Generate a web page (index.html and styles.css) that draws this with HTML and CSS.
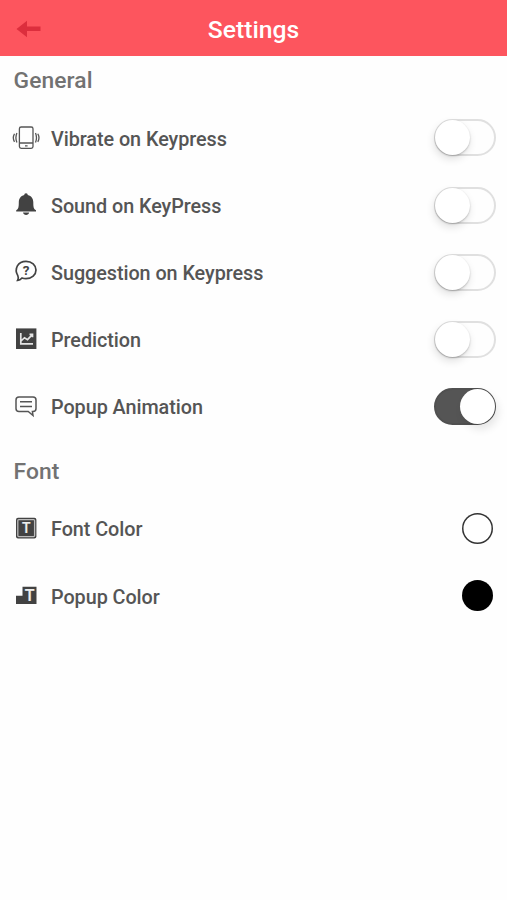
FILE: index.html
```html
<!DOCTYPE html>
<html lang="en">
<head>
<meta charset="utf-8">
<title>Settings</title>
<link rel="stylesheet" href="styles.css">
</head>
<body>
<header class="bar">
  <svg class="back" viewBox="0 0 26 18"><path d="M.5 9 11 .7v5.8h13.500v4.600H11v6.200z"/></svg>
  <h1>Settings</h1>
</header>
<main>
  <h2 class="section">General</h2>
  <div class="row">
    <svg class="icon line" viewBox="0 0 28 28"><rect x="7.400" y="3" width="13.600" height="21.400" rx="1.800"/><path d="M7.400 19H21M13 21.800h2.600M4.900 9q-2 4.700 0 9.400M2.500 9.700q-2.400 4.200 0 8.200M23.500 9q2 4.700 0 9.400M25.800 9.700q2.400 4.200 0 8.200"/></svg>
    <span class="label">Vibrate on Keypress</span><span class="toggle"></span>
  </div>
  <div class="row">
    <svg class="icon" viewBox="0 0 28 28"><path d="M14 2.300c1.200 0 1.700.8 1.700 1.600 3.900.9 5.600 3.700 5.600 7.300 0 4.900.4 6.800 2.700 8.100v1.100H4.200v-1.100c2.300-1.300 2.600-3.200 2.600-8.100 0-3.600 1.700-6.400 5.500-7.300 0-.8.500-1.600 1.700-1.600zM11 21.500h6.200c-.4 3.300-5.800 3.300-6.200 0z"/></svg>
    <span class="label">Sound on KeyPress</span><span class="toggle"></span>
  </div>
  <div class="row">
    <svg class="icon" viewBox="0 0 28 28"><path class="bubble" d="M5.800 17.700C1.800 10.700 6 3.300 14 3.300c5.800 0 10 3.900 10 8.700s-4.200 8.700-10 8.700c-1.600 0-2.800-.2-4-.7-1.300 1.500-2.700 2.300-4.400 2.400.9-1.600 1-3.100.2-4.700z"/><text class="question" x="14" y="16.800">?</text></svg>
    <span class="label">Suggestion on Keypress</span><span class="toggle"></span>
  </div>
  <div class="row">
    <svg class="icon" viewBox="0 0 28 28"><path d="M4 3.400h20.400V24H4z"/><path class="chart" d="M8.800 8v10.800H21M9 16l3.500-3.300 3 1.900 4.800-5M17.500 9.300h3v3"/></svg>
    <span class="label">Prediction</span><span class="toggle"></span>
  </div>
  <div class="row">
    <svg class="icon line popup" viewBox="0 0 28 28"><path d="M7 4h14q3 0 3 3v8.500q0 3-3 3h-.6l.6 4-4.800-4H7q-3 0-3-3V7q0-3 3-3zM8 8.800h12M8 13.500h12"/></svg>
    <span class="label">Popup Animation</span><span class="toggle on"></span>
  </div>
  <h2 class="section font">Font</h2>
  <div class="row">
    <svg class="icon" viewBox="0 0 28 28"><rect x="4" y="2.800" width="20.400" height="20.600" rx="2"/><rect class="frame" x="5.800" y="4.600" width="16.800" height="17" rx="1"/><text class="light small" x="14.200" y="18">T</text></svg>
    <span class="label">Font Color</span><span class="swatch white"></span>
  </div>
  <div class="row">
    <svg class="icon" viewBox="0 0 28 28"><path d="M10.500 4.800h14V22H4v-8.200h6.500z"/><text class="light large" x="17.700" y="19.300">T</text></svg>
    <span class="label">Popup Color</span><span class="swatch"></span>
  </div>
</main>
</body>
</html>
```
FILE: styles.css
```css
* { box-sizing: border-box; }
body {
  margin: 0;
  min-height: 900px;
  background: #fefefe;
  color: #555;
  font-family: Roboto, "Liberation Sans", sans-serif;
}
.bar {
  display: grid;
  grid-template-columns: 60px 1fr 60px;
  align-items: center;
  height: 55.500px;
  background: #fd555e;
}
.back { width: 26px; height: 18px; margin: 2px 0 0 16px; fill: #dc2e3d; }
h1 {
  margin: 5px 0 0;
  color: #fff;
  font-size: 24.700px;
  font-weight: 500;
  line-height: 30px;
  text-align: center;
}
.section {
  height: 48.800px;
  margin: 0;
  padding: 0 13.500px;
  color: #727272;
  font-size: 22.800px;
  font-weight: 500;
  letter-spacing: .1px;
  line-height: 49px;
}
.section.font { height: 54.700px; line-height: 64px; }
.row {
  display: flex;
  align-items: center;
  height: 67.200px;
  padding: 0 11px 0 12px;
}
.icon { width: 28px; height: 28px; margin-right: 11px; fill: #424242; }
.icon text { font-family: Roboto, sans-serif; font-weight: 500; text-anchor: middle; }
.icon .question { font-size: 13.500px; font-weight: 700; }
.icon .small { font-size: 14px; }
.icon .large { font-size: 16px; }
.icon .light { fill: #eee; stroke: #eee; stroke-width: .2; }
.line { fill: none; stroke: #555; stroke-width: 1.300; }
.popup { stroke-width: 1.500; }
.bubble { fill: none; stroke: #424242; stroke-width: 1.700; }
.chart { fill: none; stroke: #e4e4e4; stroke-width: 1.700; }
.frame { fill: none; stroke: #bbb; stroke-width: 1.300; }
.label {
  flex: 1;
  padding-top: 3.600px;
  font-size: 19.800px;
  font-weight: 500;
  letter-spacing: -.05px;
  line-height: 26px;
}
.toggle {
  display: flex;
  width: 62px;
  height: 37px;
  border: 2px solid #e0e0e0;
  border-radius: 19px;
}
.toggle::before {
  content: "";
  width: 35px;
  height: 35px;
  margin: -1px;
  border-radius: 50%;
  background: #fff;
  box-shadow: 0 1px 2px rgba(0, 0, 0, .22), -1px 4px 8px rgba(0, 0, 0, .12);
}
.toggle.on { justify-content: flex-end; background: #555; border-color: #505050; }
.toggle.on::before { box-shadow: 3px 5px 9px rgba(0, 0, 0, .1); }
.swatch { width: 31px; height: 31px; margin-right: 3.500px; border-radius: 50%; background: #000; }
.swatch.white { background: #fff; box-shadow: inset 0 0 0 1.500px #333; }
```
